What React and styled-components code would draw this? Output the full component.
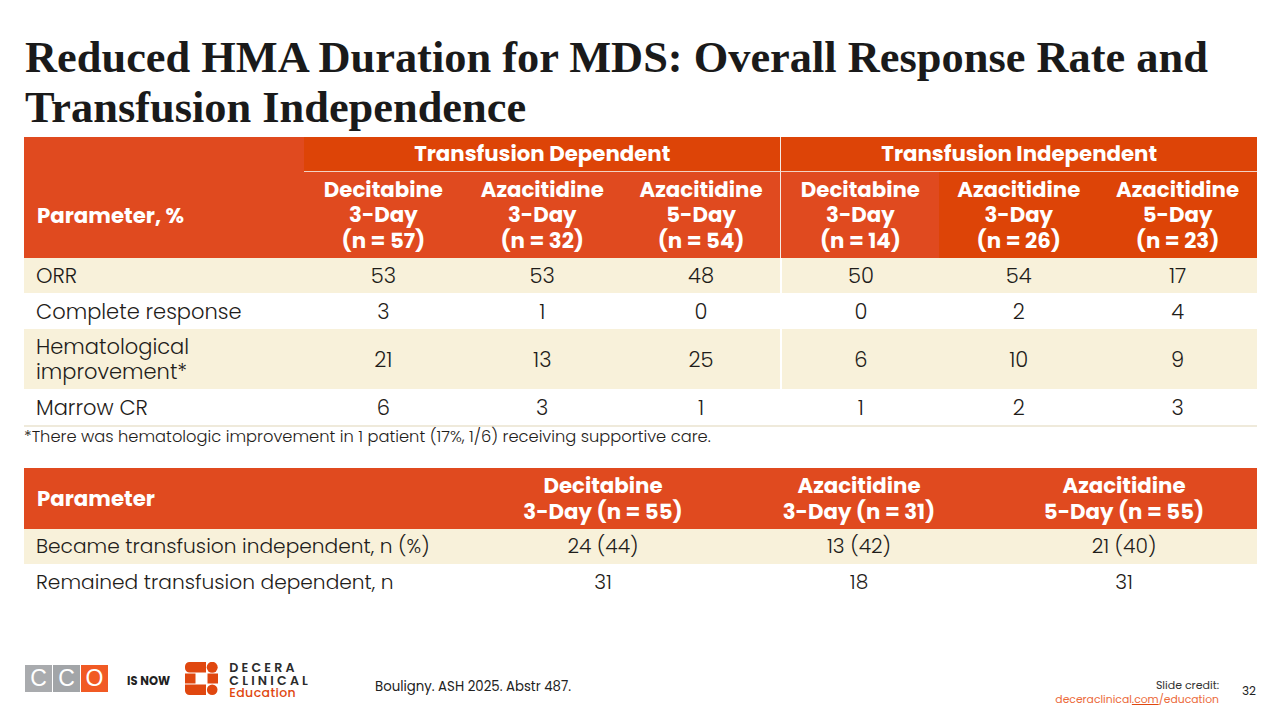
import React from "react";
import styled, { createGlobalStyle } from "styled-components";

const Global = createGlobalStyle`
  html, body { margin: 0; padding: 0; background: #ffffff; }
  * { box-sizing: border-box; }
`;

const LIGHT = "#E04A1F";
const DARK = "#DD4407";
const CREAM = "#F8F1DA";
const INK = "#1F1D1A";
const SANS = `"Poppins", "Open Sans", "Liberation Sans", sans-serif`;

const Slide = styled.div`
  width: 1280px;
  height: 720px;
  display: flex;
  flex-direction: column;
  padding: 0 23px 0 24px;
  font-family: ${SANS};
  color: ${INK};
  overflow: hidden;
`;

const Title = styled.h1`
  margin: 32px 0 5px 1px;
  font-family: "Liberation Serif", "Times New Roman", serif;
  font-weight: 700;
  font-size: 44.4px;
  line-height: 50px;
  color: #1a1a1a;
`;

const Grid1 = styled.div`
  display: grid;
  grid-template-columns: 280px repeat(6, 1fr);
  border-bottom: 2px solid #EFEADB;
`;

const HeadCell = styled.div`
  background: ${(p) => (p.$dark ? DARK : LIGHT)};
  color: #fff;
  font-weight: 700;
  font-size: 21.3px;
  line-height: 25.5px;
  display: flex;
  align-items: center;
  justify-content: ${(p) => (p.$left ? "flex-start" : "center")};
  text-align: ${(p) => (p.$left ? "left" : "center")};
  padding: ${(p) => (p.$left ? `${p.$pt || "0"} 13px 0` : "0 2px")};
  grid-row: ${(p) => p.$row || "auto"};
  grid-column: ${(p) => p.$col || "auto"};
  border-left: ${(p) => (p.$sep ? "1.5px solid #F6E9E2" : "none")};
  border-bottom: ${(p) => (p.$under ? "1.5px solid #F3D2C3" : "none")};
  height: ${(p) => p.$h || "auto"};
`;

const BodyCell = styled.div`
  background: ${(p) => (p.$shade ? CREAM : "#fff")};
  font-size: ${(p) => p.$fs || "21px"};
  font-weight: 300;
  line-height: 25px;
  display: flex;
  align-items: center;
  justify-content: ${(p) => (p.$left ? "flex-start" : "center")};
  padding: ${(p) => (p.$left ? "0 12px" : "0")};
  min-height: ${(p) => p.$h || "35px"};
  border-left: ${(p) => (p.$sep ? "2px solid #fff" : "none")};
`;

const Footnote = styled.div`
  font-size: 16.3px;
  font-weight: 300;
  line-height: 20px;
  margin: 0;
`;

const Grid2 = styled.div`
  margin-top: 21px;
  display: grid;
  grid-template-columns: 455px 248px 264px 1fr;
`;

const Footer = styled.div`
  margin-top: auto;
  height: 62px;
  display: flex;
  align-items: flex-start;
  padding-top: 3px;
`;

const CCO = styled.div`
  display: flex;
  gap: 1px;
  margin-top: 4px;
  margin-left: 1px;
`;

const CCOBox = styled.div`
  width: 27px;
  height: 27px;
  background: ${(p) => p.$c};
  color: #fff;
  font-family: "Liberation Sans", Arial, sans-serif;
  font-size: 23px;
  line-height: 27px;
  text-align: center;
`;

const IsNow = styled.div`
  margin: 13px 0 0 19px;
  font-size: 11.5px;
  line-height: 14px;
  font-weight: 700;
  letter-spacing: 0.1px;
  color: #222;
`;

const Decera = styled.div`
  display: flex;
  margin: 1px 0 0 15px;
  gap: 11px;
`;

const DeceraText = styled.div`
  display: flex;
  flex-direction: column;
  font-size: 12.6px;
  line-height: 12.6px;
  font-weight: 600;
  letter-spacing: 3.2px;
  color: #2b2b2b;
  span:last-child {
    color: #E0470F;
    font-size: 12.5px;
    letter-spacing: 0.4px;
    font-weight: 500;
  }
`;

const Cite = styled.div`
  margin: 18px 0 0 64px;
  font-size: 13.3px;
  line-height: 16px;
  color: #222;
`;

const Credit = styled.div`
  margin-left: auto;
  margin-top: 18px;
  text-align: right;
  font-size: 11px;
  line-height: 13.5px;
  color: #333;
`;

const CreditLink = styled.div`
  color: #EC6A3A;
  font-size: 10.8px;
  line-height: 13.5px;
  u { text-decoration-color: #E0470F; }
`;

const PageNum = styled.div`
  margin: 23px 1px 0 23px;
  font-size: 12px;
  line-height: 14px;
  color: #222;
`;

const subHeads = [
  { t: ["Decitabine", "3-Day", "(n = 57)"], dark: false },
  { t: ["Azacitidine", "3-Day", "(n = 32)"], dark: false },
  { t: ["Azacitidine", "5-Day", "(n = 54)"], dark: false },
  { t: ["Decitabine", "3-Day", "(n = 14)"], dark: false, sep: true },
  { t: ["Azacitidine", "3-Day", "(n = 26)"], dark: true },
  { t: ["Azacitidine", "5-Day", "(n = 23)"], dark: true },
];

const rows1 = [
  { label: "ORR", v: ["53", "53", "48", "50", "54", "17"], shade: true, h: "35px" },
  { label: "Complete response", v: ["3", "1", "0", "0", "2", "4"], h: "36px" },
  { label: ["Hematological", "improvement*"], v: ["21", "13", "25", "6", "10", "9"], shade: true, h: "60px" },
  { label: "Marrow CR", v: ["6", "3", "1", "1", "2", "3"], h: "36px" },
];

const rows2 = [
  { label: "Became transfusion independent, n (%)", v: ["24 (44)", "13 (42)", "21 (40)"], shade: true, h: "35px" },
  { label: "Remained transfusion dependent, n", v: ["31", "18", "31"], h: "36px" },
];

const Lines = ({ t }) =>
  t.map((s, i) => (
    <React.Fragment key={i}>
      {i > 0 && <br />}
      {s}
    </React.Fragment>
  ));

const DeceraIcon = () => (
  <svg width="33" height="33" viewBox="0 0 33 33">
    <g fill="#E0470F">
      <path d="M4.5 0H21V10.5H4.5A4.5 4.5 0 0 1 0 6V4.5A4.5 4.5 0 0 1 4.5 0Z" />
      <circle cx="27.2" cy="5.3" r="5.5" />
      <rect x="0" y="11.5" width="10.5" height="10" />
      <rect x="22.5" y="11.5" width="10.5" height="10" />
      <path d="M0 22.5H21V33H4.5A4.5 4.5 0 0 1 0 28.5Z" />
      <circle cx="27.2" cy="27.7" r="5.3" />
    </g>
  </svg>
);

export default function App() {
  return (
    <>
      <Global />
      <Slide>
        <Title>
          Reduced HMA Duration for MDS: Overall Response Rate and
          <br />
          Transfusion Independence
        </Title>

        <Grid1>
          <HeadCell $left $row="1 / 3" $col="1" $pt="36px">Parameter, %</HeadCell>
          <HeadCell $dark $col="2 / 5" $under $h="35px">Transfusion Dependent</HeadCell>
          <HeadCell $dark $col="5 / 8" $under $sep $h="35px">Transfusion Independent</HeadCell>
          {subHeads.map((s, i) => (
            <HeadCell key={i} $dark={s.dark} $sep={s.sep} $h="86px">
              <span><Lines t={s.t} /></span>
            </HeadCell>
          ))}
          {rows1.map((r, ri) => (
            <React.Fragment key={ri}>
              <BodyCell $left $shade={r.shade} $h={r.h}>
                <span>{Array.isArray(r.label) ? <Lines t={r.label} /> : r.label}</span>
              </BodyCell>
              {r.v.map((v, i) => (
                <BodyCell key={i} $shade={r.shade} $sep={i === 3} $h={r.h}>
                  {v}
                </BodyCell>
              ))}
            </React.Fragment>
          ))}
        </Grid1>
        <Footnote>*There was hematologic improvement in 1 patient (17%, 1/6) receiving supportive care.</Footnote>

        <Grid2>
          <HeadCell $left $h="61px">Parameter</HeadCell>
          <HeadCell><span>Decitabine<br />3-Day (n = 55)</span></HeadCell>
          <HeadCell><span>Azacitidine<br />3-Day (n = 31)</span></HeadCell>
          <HeadCell><span>Azacitidine<br />5-Day (n = 55)</span></HeadCell>
          {rows2.map((r, ri) => (
            <React.Fragment key={ri}>
              <BodyCell $left $shade={r.shade} $h={r.h} $fs="20.2px">{r.label}</BodyCell>
              {r.v.map((v, i) => (
                <BodyCell key={i} $shade={r.shade} $h={r.h} $fs="20.2px">{v}</BodyCell>
              ))}
            </React.Fragment>
          ))}
        </Grid2>

        <Footer>
          <CCO>
            <CCOBox $c="#A9ABAE">C</CCOBox>
            <CCOBox $c="#A2A5A8">C</CCOBox>
            <CCOBox $c="#F15A24">O</CCOBox>
          </CCO>
          <IsNow>IS NOW</IsNow>
          <Decera>
            <DeceraIcon />
            <DeceraText>
              <span>DECERA</span>
              <span>CLINICAL</span>
              <span>Education</span>
            </DeceraText>
          </Decera>
          <Cite>Bouligny. ASH 2025. Abstr 487.</Cite>
          <Credit>
            Slide credit:
            <CreditLink>deceraclinical<u>.com</u>/education</CreditLink>
          </Credit>
          <PageNum>32</PageNum>
        </Footer>
      </Slide>
    </>
  );
}
